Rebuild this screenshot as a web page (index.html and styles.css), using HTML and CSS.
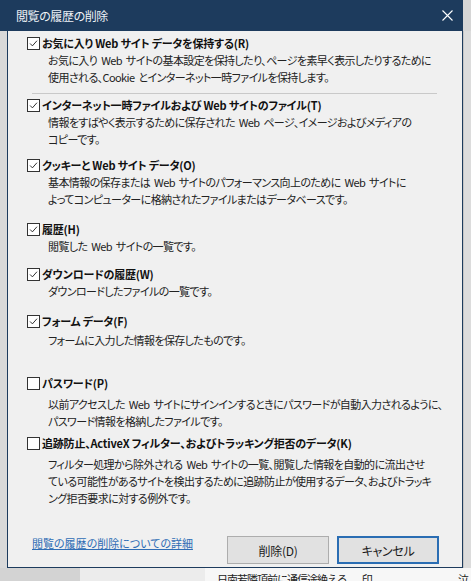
FILE: index.html
```html
<!DOCTYPE html>
<html lang="ja">
<head>
<meta charset="utf-8">
<title>閲覧の履歴の削除</title>
<link rel="stylesheet" href="styles.css">
</head>
<body>
<div class="screen">
  <div class="titlebar">
    <span class="title">閲覧の履歴の削除</span>
    <svg class="close" viewBox="0 0 11 11" aria-hidden="true"><path d="M0.5 0.5 L10.5 10.5 M10.5 0.5 L0.5 10.5" stroke="#ffffff" stroke-width="1.1" fill="none"/></svg>
  </div>
  <div class="row">
    <div class="lstrip"></div>
    <div class="dialog">
      <div class="items">
        <div class="item i1">
          <div class="label"><span class="box"><svg viewBox="0 0 13 13"><path d="M2.5 6.5 L5.2 9.3 L10.6 3.2" stroke="#222" stroke-width="1.1" fill="none"/></svg></span>お気に入り Web サイト データを保持する(R)</div>
          <p class="desc">お気に入り Web サイトの基本設定を保持したり、ページを素早く表示したりするために<br>使用される、Cookie とインターネット一時ファイルを保持します。</p>
        </div>
        <div class="sep"></div>
        <div class="item i2">
          <div class="label"><span class="box"><svg viewBox="0 0 13 13"><path d="M2.5 6.5 L5.2 9.3 L10.6 3.2" stroke="#222" stroke-width="1.1" fill="none"/></svg></span>インターネット一時ファイルおよび Web サイトのファイル(T)</div>
          <p class="desc">情報をすばやく表示するために保存された Web ページ、イメージおよびメディアの<br>コピーです。</p>
        </div>
        <div class="item i3">
          <div class="label"><span class="box"><svg viewBox="0 0 13 13"><path d="M2.5 6.5 L5.2 9.3 L10.6 3.2" stroke="#222" stroke-width="1.1" fill="none"/></svg></span>クッキーと Web サイト データ(O)</div>
          <p class="desc">基本情報の保存または Web サイトのパフォーマンス向上のために Web サイトに<br>よってコンピューターに格納されたファイルまたはデータベースです。</p>
        </div>
        <div class="item i4">
          <div class="label"><span class="box"><svg viewBox="0 0 13 13"><path d="M2.5 6.5 L5.2 9.3 L10.6 3.2" stroke="#222" stroke-width="1.1" fill="none"/></svg></span>履歴(H)</div>
          <p class="desc">閲覧した Web サイトの一覧です。</p>
        </div>
        <div class="item i5">
          <div class="label"><span class="box"><svg viewBox="0 0 13 13"><path d="M2.5 6.5 L5.2 9.3 L10.6 3.2" stroke="#222" stroke-width="1.1" fill="none"/></svg></span>ダウンロードの履歴(W)</div>
          <p class="desc">ダウンロードしたファイルの一覧です。</p>
        </div>
        <div class="item i6">
          <div class="label"><span class="box"><svg viewBox="0 0 13 13"><path d="M2.5 6.5 L5.2 9.3 L10.6 3.2" stroke="#222" stroke-width="1.1" fill="none"/></svg></span>フォーム データ(F)</div>
          <p class="desc">フォームに入力した情報を保存したものです。</p>
        </div>
        <div class="item i7">
          <div class="label"><span class="box"></span>パスワード(P)</div>
          <p class="desc">以前アクセスした Web サイトにサインインするときにパスワードが自動入力されるように、<br>パスワード情報を格納したファイルです。</p>
        </div>
        <div class="item i8">
          <div class="label"><span class="box"></span>追跡防止、ActiveX フィルター、およびトラッキング拒否のデータ(K)</div>
          <p class="desc">フィルター処理から除外される Web サイトの一覧、閲覧した情報を自動的に流出させ<br>ている可能性があるサイトを検出するために追跡防止が使用するデータ、およびトラッキ<br>ング拒否要求に対する例外です。</p>
        </div>
      </div>
      <div class="footer">
        <a class="link" href="#">閲覧の履歴の削除についての詳細</a>
        <div class="buttons">
          <button class="btn">削除(D)</button>
          <button class="btn btn-default">キャンセル</button>
        </div>
      </div>
    </div>
    <div class="rstrip"></div>
  </div>
  <div class="bottom">
    <div class="b1"></div>
    <div class="b2"></div>
    <div class="b3"><span class="btext">日南若隣頂前に通信途絶える<span class="bgap">印</span></span><span class="btext2">泣</span></div>
  </div>
</div>
</body>
</html>
```

FILE: styles.css
```css
* { box-sizing: border-box; margin: 0; padding: 0; }
html, body { width: 471px; height: 581px; overflow: hidden; }
body {
  font-family: "Noto Sans CJK JP", "Noto Sans", sans-serif;
  font-size: 12px;
  background: #d6d6d6;
  font-feature-settings: "palt";
  color: #1a1a1a;
}
.screen { display: flex; flex-direction: column; width: 471px; height: 581px; }

.titlebar {
  width: 463px;
  height: 31px;
  flex: none;
  background: #1d3b5d;
  color: #eef2f6;
  display: flex;
  align-items: center;
  justify-content: space-between;
  padding: 0 10px 0 16px;
}
.title { font-size: 12px; line-height: 14px; letter-spacing: -0.4px; }
.close { width: 11px; height: 11px; display: block; }

.row { display: flex; height: 537px; flex: none; }
.lstrip { width: 7px; background: #d9d9d9; }
.rstrip { width: 8px; background: #dcdcdc; border-left: 1px solid #c4c4c4; }

.dialog {
  width: 456px;
  border: 1px solid #1d3b5d;
  border-top: none;
  background: #f0f0f0;
  display: flex;
  flex-direction: column;
  padding: 0 0 3px 19px;
}

.item { display: flex; flex-direction: column; }
.label {
  display: flex;
  align-items: center;
  font-weight: bold;
  font-size: 11px;
  letter-spacing: -0.2px;
  line-height: 18px;
  color: #111;
  white-space: nowrap;
}
.box {
  width: 13px;
  height: 13px;
  flex: none;
  border: 1px solid #333;
  background: #fff;
  margin-right: 2px;
  display: flex;
}
.box svg { width: 11px; height: 11px; display: block; }
.desc {
  margin-left: 21px;
  font-size: 11px;
  letter-spacing: -0.6px;
  word-spacing: 2px;
  line-height: 17px;
  color: #222;
  white-space: nowrap;
}

.i1 { margin-top: 3px; }
.sep { margin: 7px 0 0 5px; width: 405px; height: 1px; background: #c9c9c9; }
.i2 { margin-top: 2px; }
.i3 { margin-top: 8px; }
.i4 { margin-top: 12px; }
.i5 { margin-top: 10px; }
.i6 { margin-top: 12px; }
.i6 .desc { margin-top: 2px; }
.i7 { margin-top: 25px; }
.i7 .desc { margin-top: 4px; }
.i8 { margin-top: 4px; }
.i8 .desc { margin-top: 4px; }

.footer {
  margin-top: auto;
  display: flex;
  align-items: flex-start;
  padding-right: 23px;
}
.link {
  margin: -2px 0 0 5px;
  font-size: 11px;
  line-height: 18px;
  color: #2f6db5;
  text-decoration: underline;
}
.buttons { margin-left: auto; display: flex; gap: 8px; }
.btn {
  width: 102px;
  height: 28px;
  background: #e1e1e1;
  border: 1px solid #adadad;
  font-family: inherit;
  font-size: 12px;
  letter-spacing: -0.3px;
  color: #1a1a1a;
  font-feature-settings: "palt";
}
.btn-default { border: 2px solid #2a6db3; }

.bottom { display: flex; height: 13px; flex: none; overflow: hidden; }
.b1 { width: 80px; background: #d3d3d3; }
.b2 { width: 125px; background: #ececec; }
.b3 {
  flex: 1;
  background: #f7f7f7;
  display: flex;
  justify-content: space-between;
  padding: 3px 3px 0 12px;
  font-size: 11px;
  letter-spacing: -1px;
  line-height: 16px;
  color: #222;
  white-space: nowrap;
  font-feature-settings: normal;
}
.bgap { margin-left: 15px; }
```
